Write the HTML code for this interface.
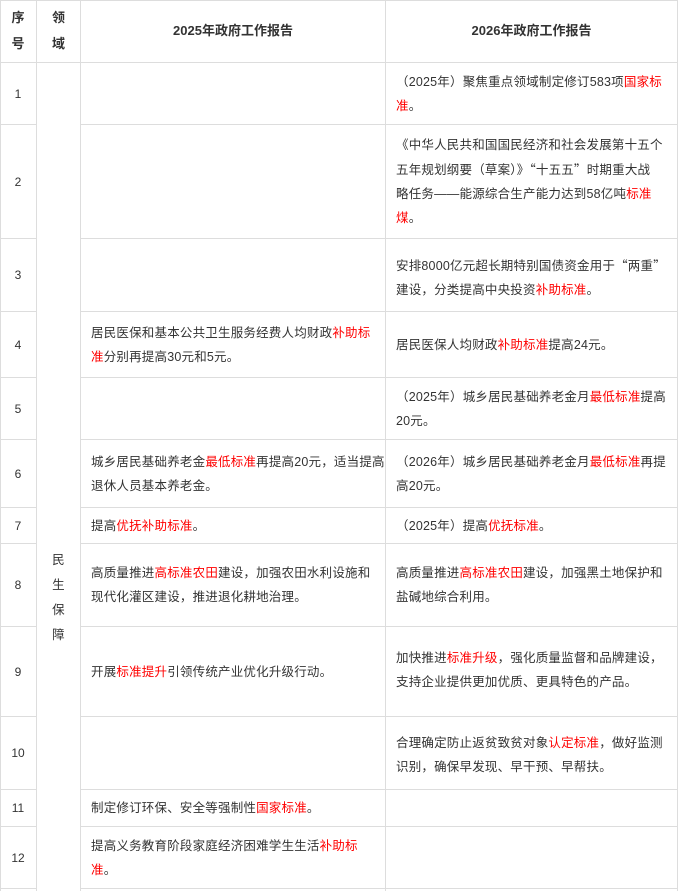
<!DOCTYPE html>
<html style="overflow:hidden;height:891px"><head><meta charset="utf-8"><style>
body{margin:0;background:#fff;width:678px;height:891px;overflow:hidden;position:relative;font-family:"Liberation Sans","Noto Sans CJK SC",sans-serif;color:#333;font-size:12.5px;letter-spacing:0.2px}
.c{position:absolute;box-sizing:border-box;border-right:1px solid #ddd;border-bottom:1px solid #ddd;display:flex;align-items:center;line-height:24px}
.n{justify-content:center;font-size:12px;letter-spacing:0}
.t{padding-left:10px;padding-right:2px;white-space:nowrap}
.h{justify-content:center;font-weight:bold;text-align:center;line-height:26px;font-size:13px;letter-spacing:0}
r{color:#f00}
.qq{font-family:"Noto Sans CJK SC",sans-serif}
</style></head><body>
<div style="position:absolute;left:0;top:0;width:1px;height:891px;background:#ddd"></div>
<div style="position:absolute;left:0;top:0;width:678px;height:1px;background:#ddd"></div>
<div class="c h" style="left:0;top:0;width:37px;height:63px">序<br>号</div>
<div class="c h" style="left:37px;top:0;width:44px;height:63px">领<br>域</div>
<div class="c h" style="left:81px;top:0;width:305px;height:63px">2025年政府工作报告</div>
<div class="c h" style="left:386px;top:0;width:292px;height:63px">2026年政府工作报告</div>
<div class="c" style="left:37px;top:63px;width:44px;height:828px;border-bottom:none;justify-content:center;align-items:flex-start;padding-top:485px;line-height:25px;text-align:center">民<br>生<br>保<br>障</div>

<div class="c n" style="left:0;top:63px;width:37px;height:62px">1</div>
<div class="c t" style="left:81px;top:63px;width:305px;height:62px"></div>
<div class="c t" style="left:386px;top:63px;width:292px;height:62px"><div>（2025年）聚焦重点领域制定修订583项<r>国家标</r><br><r>准</r>。</div></div>

<div class="c n" style="left:0;top:125px;width:37px;height:114px">2</div>
<div class="c t" style="left:81px;top:125px;width:305px;height:114px"></div>
<div class="c t" style="left:386px;top:125px;width:292px;height:114px"><div>《中华人民共和国国民经济和社会发展第十五个<br>五年规划纲要（草案）》<span class="qq">“十五五”</span>时期重大战<br>略任务——能源综合生产能力达到58亿吨<r>标准</r><br><r>煤</r>。</div></div>

<div class="c n" style="left:0;top:239px;width:37px;height:73px">3</div>
<div class="c t" style="left:81px;top:239px;width:305px;height:73px"></div>
<div class="c t" style="left:386px;top:239px;width:292px;height:73px;padding-top:4px"><div>安排8000亿元超长期特别国债资金用于<span class="qq">“两重”</span><br>建设，分类提高中央投资<r>补助标准</r>。</div></div>

<div class="c n" style="left:0;top:312px;width:37px;height:66px">4</div>
<div class="c t" style="left:81px;top:312px;width:305px;height:66px"><div>居民医保和基本公共卫生服务经费人均财政<r>补助标</r><br><r>准</r>分别再提高30元和5元。</div></div>
<div class="c t" style="left:386px;top:312px;width:292px;height:66px"><div>居民医保人均财政<r>补助标准</r>提高24元。</div></div>

<div class="c n" style="left:0;top:378px;width:37px;height:62px">5</div>
<div class="c t" style="left:81px;top:378px;width:305px;height:62px"></div>
<div class="c t" style="left:386px;top:378px;width:292px;height:62px"><div>（2025年）城乡居民基础养老金月<r>最低标准</r>提高<br>20元。</div></div>

<div class="c n" style="left:0;top:440px;width:37px;height:68px">6</div>
<div class="c t" style="left:81px;top:440px;width:305px;height:68px"><div>城乡居民基础养老金<r>最低标准</r>再提高20元，适当提高<br>退休人员基本养老金。</div></div>
<div class="c t" style="left:386px;top:440px;width:292px;height:68px"><div>（2026年）城乡居民基础养老金月<r>最低标准</r>再提<br>高20元。</div></div>

<div class="c n" style="left:0;top:508px;width:37px;height:36px">7</div>
<div class="c t" style="left:81px;top:508px;width:305px;height:36px"><div>提高<r>优抚补助标准</r>。</div></div>
<div class="c t" style="left:386px;top:508px;width:292px;height:36px"><div>（2025年）提高<r>优抚标准</r>。</div></div>

<div class="c n" style="left:0;top:544px;width:37px;height:83px">8</div>
<div class="c t" style="left:81px;top:544px;width:305px;height:83px"><div>高质量推进<r>高标准农田</r>建设，加强农田水利设施和<br>现代化灌区建设，推进退化耕地治理。</div></div>
<div class="c t" style="left:386px;top:544px;width:292px;height:83px"><div>高质量推进<r>高标准农田</r>建设，加强黑土地保护和<br>盐碱地综合利用。</div></div>

<div class="c n" style="left:0;top:627px;width:37px;height:90px">9</div>
<div class="c t" style="left:81px;top:627px;width:305px;height:90px"><div>开展<r>标准提升</r>引领传统产业优化升级行动。</div></div>
<div class="c t" style="left:386px;top:627px;width:292px;height:90px;padding-bottom:4px"><div>加快推进<r>标准升级</r>，强化质量监督和品牌建设，<br>支持企业提供更加优质、更具特色的产品。</div></div>

<div class="c n" style="left:0;top:717px;width:37px;height:73px">10</div>
<div class="c t" style="left:81px;top:717px;width:305px;height:73px"></div>
<div class="c t" style="left:386px;top:717px;width:292px;height:73px;padding-top:4px"><div>合理确定防止返贫致贫对象<r>认定标准</r>，做好监测<br>识别，确保早发现、早干预、早帮扶。</div></div>

<div class="c n" style="left:0;top:790px;width:37px;height:37px">11</div>
<div class="c t" style="left:81px;top:790px;width:305px;height:37px"><div>制定修订环保、安全等强制性<r>国家标准</r>。</div></div>
<div class="c t" style="left:386px;top:790px;width:292px;height:37px"></div>

<div class="c n" style="left:0;top:827px;width:37px;height:62px">12</div>
<div class="c t" style="left:81px;top:827px;width:305px;height:62px"><div>提高义务教育阶段家庭经济困难学生生活<r>补助标</r><br><r>准</r>。</div></div>
<div class="c t" style="left:386px;top:827px;width:292px;height:62px"></div>
<div class="c" style="left:0;top:889px;width:37px;height:2px;border-bottom:none"></div>
<div class="c" style="left:81px;top:889px;width:305px;height:2px;border-bottom:none"></div>
<div class="c" style="left:386px;top:889px;width:292px;height:2px;border-bottom:none"></div>
</body></html>
